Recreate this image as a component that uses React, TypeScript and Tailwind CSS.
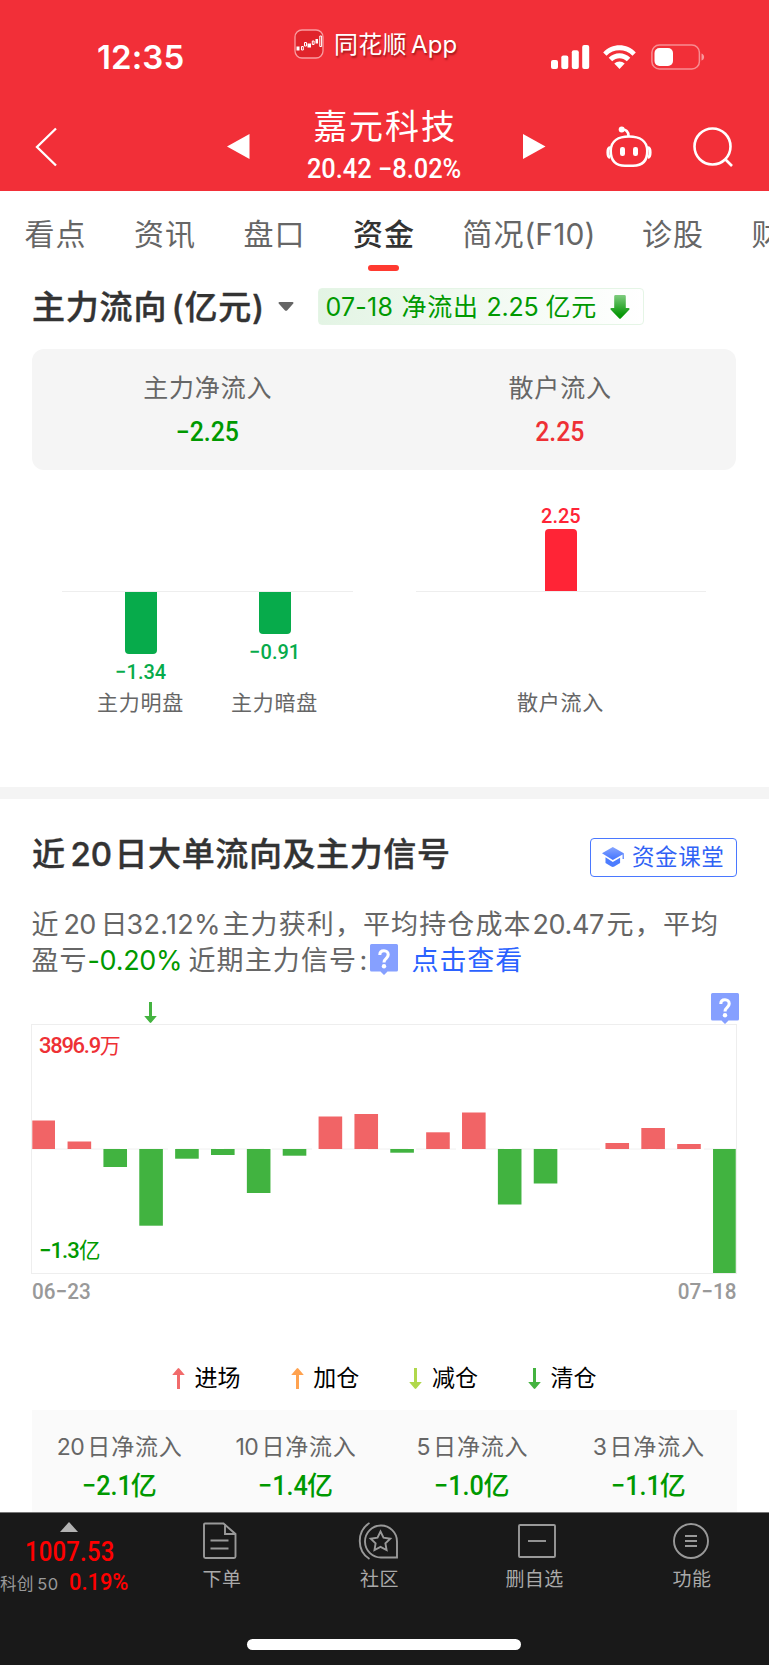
import React from "react";

const SANS = "font-['Inter','Noto_Sans_CJK_SC',sans-serif]";
const DIN = "font-['Roboto','Noto_Sans_CJK_SC',sans-serif] font-medium";

function QuestionBadge({ className = "" }: { className?: string }) {
  return (
    <svg width="28" height="31" viewBox="0 0 28 31" className={`shrink-0 ${className}`}>
      <path d="M1.500 0h25A1.500 1.500 0 0 1 28 1.500V26a1.500 1.500 0 0 1-1.500 1.500H17.500L14 31l-3.500-3.500H1.500A1.500 1.500 0 0 1 0 26V1.500A1.500 1.500 0 0 1 1.500 0Z" fill="#86a0ff" />
      <path d="M9.800 11c0-2.600 1.700-4.200 4.200-4.200s4.200 1.600 4.200 3.900c0 1.900-1 2.800-2.200 3.900-1.300 1.100-2 1.900-2 3.900" fill="none" stroke="#fff" strokeWidth="3.100" />
      <circle cx="14" cy="22.300" r="2.200" fill="#fff" />
    </svg>
  );
}

function SignalArrow({ color, up = false }: { color: string; up?: boolean }) {
  return (
    <svg width="13" height="21" viewBox="0 0 13 21" className={up ? "shrink-0 rotate-180" : "shrink-0"}>
      <path d="M5 0h3v14H12.800L7.300 20.500q-.8.800-1.600 0L0.200 14H5Z" fill={color} />
    </svg>
  );
}

function StatusBar() {
  return (
    <div className="flex h-[100px] items-start">
      <div className="mt-[45px] ml-[97px] w-[87px] text-[33px] leading-6 font-semibold tracking-[0.100px] whitespace-nowrap">12:35</div>
      <svg width="30" height="30" viewBox="0 0 30 30" className="mt-[29px] ml-[110px]">
        <rect x="1" y="1" width="28" height="28" rx="7" fill="#e0242b" stroke="#f99ca0" strokeWidth="1.300" />
        <path d="M2.500 17.500h3v4h-3zM13.500 14.500h3.500v4H13.500zM21.500 10h2.500v4.500h-2.500z" fill="#fff" />
        <path d="M7.500 17.500h1.800v3.500H7.500zM10.500 13.500h2v3.500h-2zM18.300 12h1.800v3.500h-1.800zM25.800 7h1.800v10.500h-1.800z" fill="none" stroke="#fff" strokeWidth="1" />
      </svg>
      <div className="mt-[33px] ml-[10px] flex w-[217px] text-[24px] leading-6 whitespace-nowrap [text-shadow:1px_2px_2px_rgba(90,0,0,0.55)]">
        <span className="w-[77px] tracking-[0.200px]">同花顺</span>
        <span className="tracking-[0.100px]">App</span>
      </div>
      <svg width="39" height="24" viewBox="0 0 39 24" className="mt-[45px]" fill="#fff">
        <rect x="0" y="15" width="7" height="9" rx="2" />
        <rect x="10.300" y="10.500" width="7" height="13.500" rx="2" />
        <rect x="20.800" y="5.300" width="7" height="18.700" rx="2" />
        <rect x="31.200" y="0" width="7" height="24" rx="2" />
      </svg>
      <svg width="33" height="24" viewBox="0 0 33 24" className="mt-[45px] ml-[13px]" fill="#fff">
        <path d="M0.200 7.400C9-2.100 24-2.100 32.800 7.400L29.500 10.700C22.500 3.500 10.500 3.500 3.500 10.700Z" />
        <path d="M5.700 12.800c6-6 15.600-6 21.600 0L23.800 16.200c-4.200-4-10.400-4-14.600 0Z" />
        <path d="M11.300 18.500c3-2.700 7.400-2.700 10.400 0L16.500 24Z" />
      </svg>
      <svg width="54" height="26" viewBox="0 0 54 26" className="mt-[44px] ml-[15px]">
        <rect x="0.900" y="1" width="47.500" height="24" rx="7.500" fill="none" stroke="#fff" strokeOpacity="0.450" strokeWidth="1.500" />
        <rect x="3.500" y="4" width="18.500" height="18" rx="5" fill="#fff" />
        <path d="M50.500 9.500c3.500 1 3.500 6 0 7Z" fill="#fff" fillOpacity="0.500" />
      </svg>
    </div>
  );
}

function Header() {
  return (
    <header className="h-[191px] bg-[#f22f38] text-white">
      <StatusBar />
      <div className="flex h-[90px] items-start">
        <svg width="22" height="40" viewBox="0 0 22 40" className="mt-[27px] ml-[35px]">
          <path d="M21 1.500 2 20l19 18.500" fill="none" stroke="#fff" strokeWidth="2.300" />
        </svg>
        <svg width="23" height="25" viewBox="0 0 23 25" className="mt-[34px] ml-[170px]">
          <path d="M0 12.500 22.500 0v25Z" fill="#fff" />
        </svg>
        <div className="ml-[51px] flex w-[168px] flex-col items-center whitespace-nowrap">
          <div className="mt-[9px] h-9 text-[34px] leading-9 tracking-[1.900px]">嘉元科技</div>
          <div className={`mt-[10px] -ml-[2px] h-7 origin-center scale-x-[0.940] text-[27px] leading-7 ${DIN}`}>20.42 −8.02%</div>
        </div>
        <svg width="23" height="25" viewBox="0 0 23 25" className="mt-[34px] ml-[54px]">
          <path d="M22.500 12.500 0 0v25Z" fill="#fff" />
        </svg>
        <svg width="46" height="42" viewBox="0 0 46 42" className="mt-[26px] ml-[60px]" fill="none" stroke="#fff" strokeWidth="2.600">
          <path d="M23 10.500c10.500 0 18.300 4.500 18.300 14.500S36 39.700 27 39.700h-8C10 39.700 4.700 35 4.700 25S12.500 10.500 23 10.500Z" />
          <path d="M4 21.500c-2.800.5-2.800 9.500 0 10M42 21.500c2.800.5 2.800 9.500 0 10" strokeWidth="3" />
          <path d="M16 3.500c4-.3 6.500 2 6.500 6.500" />
          <circle cx="15.700" cy="3.500" r="3" fill="#fff" stroke="none" />
          <rect x="14" y="21" width="5" height="9" rx="2.200" fill="#fff" stroke="none" />
          <rect x="27" y="21" width="5" height="9" rx="2.200" fill="#fff" stroke="none" />
        </svg>
        <svg width="41" height="40" viewBox="0 0 41 40" className="mt-[27px] ml-[41px]" fill="none" stroke="#fff" strokeWidth="2.600">
          <circle cx="19.500" cy="19.500" r="18" />
          <path d="m32 32 7 7" />
        </svg>
      </div>
    </header>
  );
}

const tabs = [
  { name: "看点", width: "w-[62px]" },
  { name: "资讯", width: "w-[62px]" },
  { name: "盘口", width: "w-[62px]" },
  { name: "资金", width: "w-[62px]", active: true },
  { name: "简况(F10)", width: "w-[132px]" },
  { name: "诊股", width: "w-[62px]" },
  { name: "财务", width: "w-[62px]" },
];

function Tabs() {
  return (
    <nav className="flex h-[86px] gap-[47.500px] overflow-hidden pl-[24.500px]">
      {tabs.map((t) => (
        <div key={t.name} className={`flex shrink-0 flex-col items-center ${t.width}`}>
          <div className={`mt-[23px] w-full text-[30px] leading-10 tracking-[0.900px] whitespace-nowrap ${t.active ? "font-medium text-[#333]" : "text-[#666]"}`}>
            {t.name.includes("(") ? <>简况<span className="tracking-[0.100px]">(F10)</span></> : t.name}
          </div>
          {t.active && <div className="mt-[11px] -ml-[2px] h-[6px] w-[31px] rounded-full bg-[#ff3a30]" />}
        </div>
      ))}
    </nav>
  );
}

function FlowTitle() {
  return (
    <div className="flex h-[72px] items-start pl-[32px]">
      <h2 className="mt-[10px] flex w-[246px] text-[33px] leading-10 font-medium tracking-[0.800px] whitespace-nowrap text-[#333] [-webkit-text-stroke:0.400px_#333]">
        <span className="w-[139.500px]">主力流向</span>
        <span>(亿元)</span>
      </h2>
      <svg width="16" height="9" viewBox="0 0 16 9" className="mt-[25px]">
        <path d="M1.500 0h13c1 0 1.300 1 .6 1.700L9.300 8.200c-.7.800-1.800.8-2.500 0L.9 1.700C.2 1 .5 0 1.500 0Z" fill="#666" />
      </svg>
      <div className="mt-[11px] ml-[24px] flex h-[37px] w-[326px] items-center rounded-[4px] border border-[#e5f5e6] bg-gradient-to-r from-[#e3f4e4] to-white pl-[6.500px] text-[25px] leading-9 whitespace-nowrap text-[#090]">
        <span className="w-[76px] tracking-[0.200px]">07-18</span>
        <span className="w-[85px] tracking-[0.800px]">净流出</span>
        <span className="w-[59px] tracking-[-0.200px]">2.25</span>
        <span className="tracking-[0.800px]">亿元</span>
        <svg width="20" height="24" viewBox="0 0 20 24" className="ml-[13px]">
          <defs>
            <linearGradient id="drop" x1="0" y1="0" x2="0" y2="1">
              <stop offset="0" stopColor="#7fcc7f" />
              <stop offset="0.800" stopColor="#0c990c" />
              <stop offset="1" stopColor="#090" />
            </linearGradient>
          </defs>
          <path d="M5.500 0h9a1.300 1.300 0 0 1 1.300 1.300V13h2.800c1 0 1.300 1 .6 1.700L11 23.300c-.6.700-1.400.7-2 0L.8 14.700C.1 14 .4 13 1.400 13h2.800V1.300A1.300 1.300 0 0 1 5.500 0Z" fill="url(#drop)" />
        </svg>
      </div>
    </div>
  );
}

function Summary() {
  const items = [
    { label: "主力净流入", value: "−2.25", color: "text-[#090]" },
    { label: "散户流入", value: "2.25", color: "text-[#ee3035]" },
  ];
  return (
    <div className="mr-[32.700px] ml-[31.600px] grid h-[121px] grid-cols-2 rounded-[12px] bg-[#f5f5f5]">
      {items.map((i) => (
        <div key={i.label} className="flex flex-col items-center">
          <div className="mt-[21px] text-[25px] leading-9 tracking-[0.800px] text-[#666]">{i.label}</div>
          <div className={`mt-[12px] scale-x-[0.920] text-[27px] leading-7 ${DIN} ${i.color}`}>{i.value}</div>
        </div>
      ))}
    </div>
  );
}

function FlowBar({ label, value, height }: { label: string; value: string; height: string }) {
  return (
    <div className="flex w-[134px] flex-col items-center">
      <div className="flex h-[103px] flex-col items-center">
        <div className={`w-[31.500px] rounded-b-[4px] bg-[#07ab4b] ${height}`} />
        <div className={`mt-[8px] scale-x-[0.950] text-[21px] leading-5 text-[#07ab4b] ${DIN}`}>{value}</div>
      </div>
      <div className="-ml-[1px] text-[21px] leading-4 tracking-[0.700px] whitespace-nowrap text-[#666]">{label}</div>
    </div>
  );
}

function FlowCharts() {
  return (
    <div className="flex h-[317px] pl-[62px]">
      <div className="mt-[121px] h-[120px] w-[291px] border-t border-[#eee]">
        <div className="flex pl-[12px]">
          <FlowBar label="主力明盘" value="−1.34" height="h-[62px]" />
          <FlowBar label="主力暗盘" value="−0.91" height="h-[42px]" />
        </div>
      </div>
      <div className="ml-[63px] flex w-[290px] flex-col items-center">
        <div className={`mt-[36px] scale-x-[0.950] text-[21px] leading-5 text-[#ff2436] ${DIN}`}>2.25</div>
        <div className="mt-[3px] h-[62px] w-[31.500px] rounded-t-[4px] bg-[#ff2436]" />
        <div className="h-[104px] w-full border-t border-[#eee]" />
        <div className="-ml-[1px] text-[21px] leading-4 tracking-[0.700px] text-[#666]">散户流入</div>
      </div>
    </div>
  );
}

function SignalIntro() {
  return (
    <>
      <div className="flex h-[108px] items-start justify-between pr-[32px] pl-[32px]">
        <h2 className="mt-[35px] flex text-[33px] leading-10 font-medium tracking-[0.600px] whitespace-nowrap text-[#333] [-webkit-text-stroke:0.400px_#333]">
          <span className="w-[38.500px]">近</span>
          <span className="w-[44px] tracking-[0px]">20</span>
          <span>日大单流向及主力信号</span>
        </h2>
        <button className="mt-[39px] flex h-[39px] w-[147px] items-center rounded-[4px] border border-[#4a78ff] pb-[1px] pl-[11px] text-[22.500px] leading-8 whitespace-nowrap text-[#3062f5]">
          <svg width="22" height="20" viewBox="0 0 22 20" className="mr-[8px]">
            <defs>
              <linearGradient id="cap" x1="0" y1="0" x2="0" y2="1">
                <stop offset="0" stopColor="#86a5ff" />
                <stop offset="1" stopColor="#4273ff" />
              </linearGradient>
            </defs>
            <path d="M10.800 0 21.800 6.200V12h-1.200V7.400L10.800 13 0 6.200Z" fill="url(#cap)" />
            <path d="m3.500 10.300 7.300 4.600 7.300-4.200v5.300l-5.800 3.500c-1 .6-2 .6-3 0L3.500 16Z" fill="#4d7dff" />
          </svg>
          <span className="tracking-[0.600px]">资金课堂</span>
        </button>
      </div>
      <div className="pl-[31.500px] text-[27px] whitespace-nowrap text-[#666]">
        <div className="flex h-[36px] leading-9">
          <span className="w-[32px]">近</span>
          <span className="w-[37px] tracking-[-0.600px]">20</span>
          <span className="w-[26px]">日</span>
          <span className="w-[96px] tracking-[0.300px]">32.12%</span>
          <span className="w-[310px] tracking-[1.100px]">主力获利，平均持仓成本</span>
          <span className="w-[74px] tracking-[-0.400px]">20.47</span>
          <span className="tracking-[1.200px]">元，平均</span>
        </div>
        <div className="flex h-[35px] leading-9">
          <span className="w-[56px] tracking-[1.100px]">盈亏</span>
          <span className="w-[101px] tracking-[-0.300px] text-[#090]">-0.20%</span>
          <span className="w-[171px] tracking-[1.100px]">近期主力信号</span>
          <span className="w-[10px]">:</span>
          <QuestionBadge className="mt-[1px]" />
          <span className="ml-[14px] tracking-[0.900px] text-[#2b62ff]">点击查看</span>
        </div>
      </div>
    </>
  );
}

const dailyFlow = [28.5, 7.5, -18, -76.7, -9.7, -6, -44, -6.7, 32.5, 35, -3.7, 16.7, 36.5, -55.5, -34.5, 0, 6, 21, 5, -124];

function DailyChart() {
  return (
    <div className="pr-[32px] pl-[31px]">
      <div className="flex h-[46px] items-end justify-between">
        <div className="mb-[1px] ml-[113px]">
          <SignalArrow color="#44b340" />
        </div>
        <QuestionBadge className="-mr-[2px]" />
      </div>
      <div className="relative h-[250px] border border-[#eee]">
        <svg width="704" height="248" viewBox="0 0 704 248" className="block">
          <path d="M0 124H704" stroke="#f0f0f0" strokeDasharray="40 8" />
          {dailyFlow.map((v, i) => {
            const left = i === 0 ? 0.300 : i * 35.860 - 0.300;
            const width = i === 0 || i === 19 ? 22.700 : 23.600;
            return <rect key={i} x={left} y={v > 0 ? 124 - v : 124} width={width} height={Math.abs(v)} fill={v > 0 ? "#f16466" : "#41b340"} />;
          })}
        </svg>
        <div className={`absolute top-[9px] left-[7px] flex text-[22px] leading-6 whitespace-nowrap text-[#ee3035] ${DIN}`}>
          <span className="tracking-[-1.300px]">3896.9</span>
          <span className="text-[21px] font-normal">万</span>
        </div>
        <div className={`absolute bottom-[10px] left-[7px] flex text-[22px] leading-6 whitespace-nowrap text-[#090] ${DIN}`}>
          <span className="tracking-[-0.900px]">−1.3</span>
          <span className="text-[21.500px] font-normal">亿</span>
        </div>
      </div>
      <div className={`flex h-[35px] justify-between pr-[1px] pl-[1px] text-[22px] leading-[35px] text-[#999] ${DIN}`}>
        <span className="origin-left scale-x-[0.940]">06−23</span>
        <span className="origin-right scale-x-[0.940]">07−18</span>
      </div>
    </div>
  );
}

function Legend() {
  const items = [
    { name: "进场", color: "#f16b6b", up: true },
    { name: "加仓", color: "#ffa24f", up: true },
    { name: "减仓", color: "#b0d84c", up: false },
    { name: "清仓", color: "#44b340", up: false },
  ];
  return (
    <div className="mt-[53px] flex h-[32px] pl-[172px]">
      {items.map((i) => (
        <div key={i.name} className="flex w-[118.700px] items-center gap-[9.500px] text-[23px] leading-8 text-black">
          <SignalArrow color={i.color} up={i.up} />
          <span>{i.name}</span>
        </div>
      ))}
    </div>
  );
}

function PeriodStats() {
  const items = [
    { days: "20", value: "−2.1" },
    { days: "10", value: "−1.4" },
    { days: "5", value: "−1.0" },
    { days: "3", value: "−1.1" },
  ];
  return (
    <div className="mt-[16px] mr-[32px] ml-[31.500px] grid h-[102px] grid-cols-4 bg-[#fafafa]">
      {items.map((i) => (
        <div key={i.days} className="flex flex-col items-center whitespace-nowrap">
          <div className="mt-[21px] flex gap-[3px] text-[23px] leading-8 text-[#666]">
            <span className="tracking-[-0.500px]">{i.days}</span>
            <span className="tracking-[0.800px]">日净流入</span>
          </div>
          <div className={`mt-[7px] -ml-[1px] flex text-[28px] leading-8 text-[#090] ${DIN}`}>
            <span className="w-[49px] origin-left scale-x-[0.900]">{i.value}</span>
            <span className="text-[26px]">亿</span>
          </div>
        </div>
      ))}
    </div>
  );
}

function NavItem({ label, width, iconShift = "", children }: { label: string; width: string; iconShift?: string; children: React.ReactNode }) {
  return (
    <div className={`flex shrink-0 flex-col items-center ${width}`}>
      <svg width="40" height="40" viewBox="0 0 40 40" className={`mt-[8px] ${iconShift}`} fill="none" stroke="#999" strokeWidth="1.900">
        {children}
      </svg>
      <div className="mt-[7px] text-[19px] leading-6 tracking-[0.400px] whitespace-nowrap text-[#aaa]">{label}</div>
    </div>
  );
}

function BottomBar() {
  return (
    <footer className="flex h-[153px] flex-col border-t border-[#777] bg-[#191919]">
      <div className="flex h-[126px]">
        <div className="w-[143px] shrink-0">
          <svg width="18" height="10" viewBox="0 0 18 10" className="mt-[9px] ml-[60px]">
            <path d="M0 10 9 0l9 10Z" fill="#b3b3b3" />
          </svg>
          <div className={`mt-[6px] ml-[25px] h-7 w-fit origin-left scale-x-[0.870] text-[27.500px] leading-7 tracking-[0.200px] text-[#f00] ${DIN}`}>1007.53</div>
          <div className="mt-[1px] flex items-center whitespace-nowrap">
            <span className="mt-[3px] flex w-[69px] gap-[3px] text-[16.500px] leading-7 tracking-[0.600px] text-[#999]">
              <span>科创</span>
              <span>50</span>
            </span>
            <span className={`origin-left scale-x-[0.950] text-[23px] leading-7 text-[#f00] ${DIN}`}>0.19%</span>
          </div>
        </div>
        <NavItem label="下单" width="w-[158px]" iconShift="-ml-[4px]">
          <path d="M5 2.500h18.500L35.500 13v22.500a1.500 1.500 0 0 1-1.500 1.500h-28.500A1.500 1.500 0 0 1 4 35.500v-32A1 1 0 0 1 5 2.500ZM25 3v10H35.500M10.500 19.500h18M10.500 27.500h18" />
        </NavItem>
        <NavItem label="社区" width="w-[157px]" iconShift="-ml-[3px]">
          <path d="M39 36.500H23.500A16 16 0 1 1 39 20.500ZM11.500 2C-1.500 10-1.500 30 11.500 38" />
          <path d="m22.500 10.500 3 6.200 6.800 1-4.900 4.700 1.200 6.700-6.100-3.200-6 3.200 1.100-6.700-4.900-4.700 6.800-1Z" />
        </NavItem>
        <NavItem label="删自选" width="w-[153px]" iconShift="ml-[4px]">
          <rect x="2" y="4" width="36" height="32" rx="1" />
          <path d="M11 20h18" />
        </NavItem>
        <NavItem label="功能" width="w-[162px]" iconShift="-ml-[3px]">
          <circle cx="20" cy="20" r="17" />
          <path d="M14 15h12M14 20h12M14 25h12" strokeWidth="2" />
        </NavItem>
      </div>
      <div className="ml-[247px] h-[10.500px] w-[274px] rounded-full bg-white" />
    </footer>
  );
}

export default function App() {
  return (
    <div className={`h-[1665px] w-[769px] overflow-hidden bg-white ${SANS}`}>
      <Header />
      <Tabs />
      <FlowTitle />
      <Summary />
      <FlowCharts />
      <div className="h-[12px] bg-[#f4f4f4]" />
      <SignalIntro />
      <DailyChart />
      <Legend />
      <PeriodStats />
      <BottomBar />
    </div>
  );
}
